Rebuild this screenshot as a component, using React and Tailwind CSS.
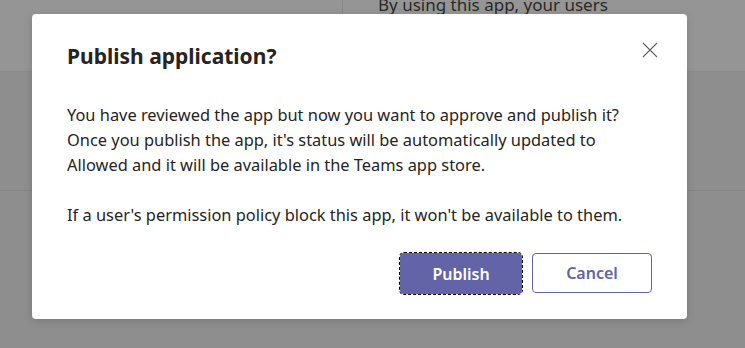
export default function App() {
  return (
    <div className="relative w-[745px] h-[348px] overflow-hidden bg-[#8e8e8e]" style={{ fontFamily: '"Noto Sans", "Open Sans", sans-serif' }}>
      {/* background page (dimmed) */}
      <div className="flex h-[72px] bg-[#959595] border-b border-[#8a8a8a]">
        <div className="w-[343px] border-r border-[#888888]"></div>
        <div className="flex-1 pl-[35px]">
          <div className="-mt-[8px] text-[17px] text-[#2a2a2a]">By using this app, your users</div>
        </div>
      </div>
      <div className="h-[119px] border-b border-[#858585]"></div>

      {/* overlay dialog */}
      <div className="absolute left-[32px] top-[14px] w-[655px] h-[305px] bg-white rounded-[4px] shadow-[0_2px_8px_rgba(0,0,0,0.15)] flex flex-col px-[35px] pt-[26px]">
        <div className="flex items-start justify-between">
          <h1 className="text-[21px] font-bold text-[#252423] leading-[32px]">Publish application?</h1>
          <button className="mt-[1px] mr-[-7px] w-[18px] h-[18px] flex items-center justify-center text-[#616161]">
            <svg width="16" height="16" viewBox="0 0 16 16" fill="none" stroke="currentColor" strokeWidth="1.1">
              <path d="M1 1 L15 15 M15 1 L1 15" />
            </svg>
          </button>
        </div>
        <div className="mt-[30px] text-[16.4px] leading-[25px] text-[#252423] whitespace-nowrap">
          <p>
            You have reviewed the app but now you want to approve and publish it?
            <br />
            Once you publish the app, it's status will be automatically updated to
            <br />
            Allowed and it will be available in the Teams app store.
          </p>
          <p className="mt-[25px]">If a user's permission policy block this app, it won't be available to them.</p>
        </div>
        <div className="mt-[26px] flex justify-end gap-[10px]">
          <button className="w-[122px] h-[41px] rounded-[4px] bg-[#6264a7] text-white text-[16px] font-semibold outline outline-1 outline-dashed outline-black outline-offset-0">Publish</button>
          <button className="w-[120px] h-[40px] rounded-[4px] border border-[#6264a7] bg-white text-[#6264a7] text-[16px] font-semibold">Cancel</button>
        </div>
      </div>
    </div>
  );
}
